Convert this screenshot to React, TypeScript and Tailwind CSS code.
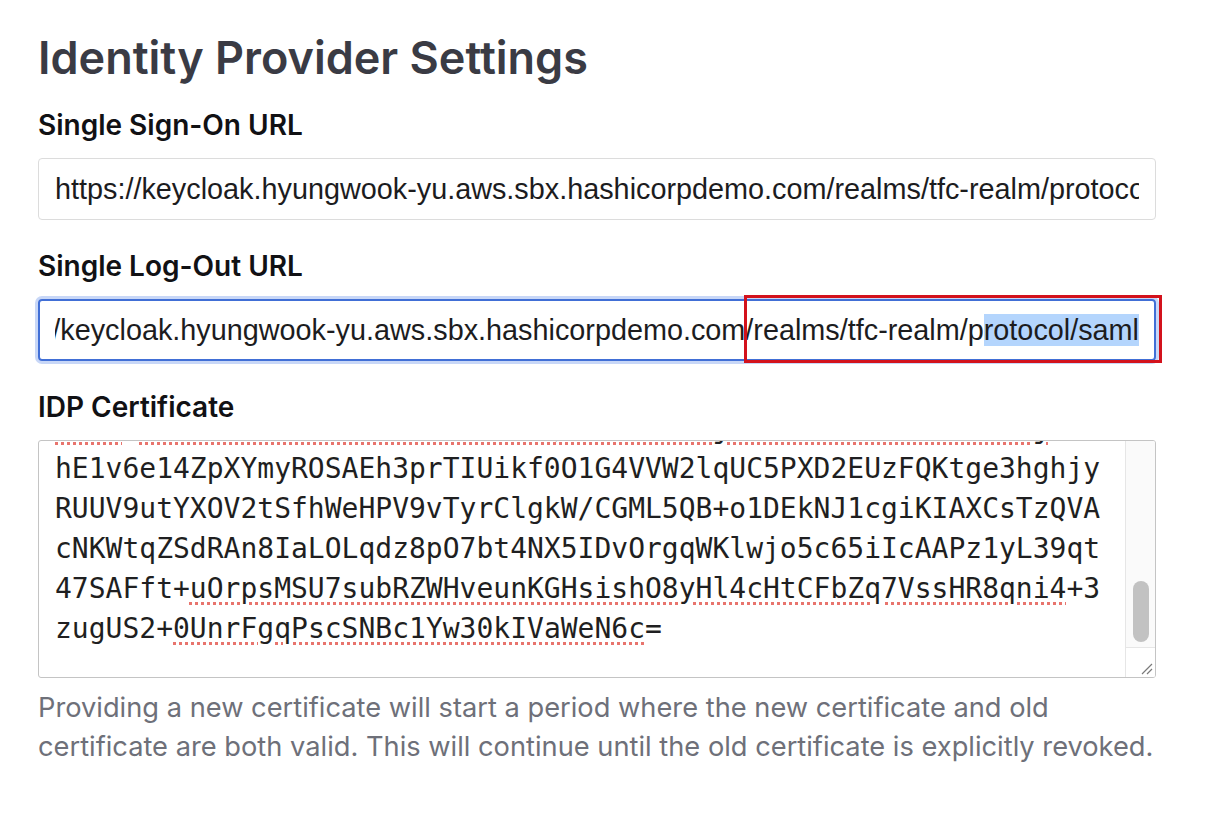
import React from 'react';

const SSO_URL =
  'https://keycloak.hyungwook-yu.aws.sbx.hashicorpdemo.com/realms/tfc-realm/protocol/saml';

function Label({ children, className = '' }: { children: React.ReactNode; className?: string }) {
  return (
    <label className={`block text-[28px] font-semibold leading-[32px] text-[#111114] ${className}`}>
      {children}
    </label>
  );
}

// spell-check style squiggle
function Sq({ children }: { children: React.ReactNode }) {
  return (
    <span className="underline decoration-dotted decoration-[#e8746d] decoration-3 underline-offset-[4px]">
      {children}
    </span>
  );
}

function CertText() {
  return (
    <div className="-mt-[32px] whitespace-pre font-['DejaVu_Sans_Mono','Liberation_Mono',monospace] text-[28px] leading-[40px] text-[#1f1f21]">
      <div>
        <Sq>Tm8u</Sq>+<Sq>XdRt3JzK0sVbW7nHs2LcYf9dQe4aUkM1iPj6oNx5wBxE3rLhZl8uDj</Sq>+Ck
      </div>
      <div>hE1v6e14ZpXYmyROSAEh3prTIUikf0O1G4VVW2lqUC5PXD2EUzFQKtge3hghjy</div>
      <div>RUUV9utYXOV2tSfhWeHPV9vTyrClgkW/CGML5QB+o1DEkNJ1cgiKIAXCsTzQVA</div>
      <div>cNKWtqZSdRAn8IaLOLqdz8pO7bt4NX5IDvOrgqWKlwjo5c65iIcAAPz1yL39qt</div>
      <div>
        47SAFft+<Sq>uOrpsMSU7subRZWHveunKGHsishO8yHl4cHtCFbZq7VssHR8qni4</Sq>+3
      </div>
      <div>
        zugUS2+<Sq>0UnrFgqPscSNBc1Yw30kIVaWeN6c</Sq>=
      </div>
    </div>
  );
}

export default function App() {
  return (
    <div className="min-h-screen w-full bg-white font-['Inter','Noto_Sans',sans-serif]">
      <div className="ml-[38px] flex w-[1118px] flex-col pt-[30px]">
        <h1 className="text-[45px] font-semibold leading-[56px] text-[#3a3b44]">
          Identity Provider Settings
        </h1>

        <Label className="mt-[23px]">Single Sign-On URL</Label>
        <div className="mt-[17px] flex h-[62px] items-center rounded-[4px] border border-[#dcdcdc] px-[16px]">
          <div className="min-w-0 flex-1 overflow-hidden whitespace-nowrap font-['Liberation_Sans',Arial,sans-serif] text-[28.8px] leading-[34px] text-[#1c1c1e]">
            {SSO_URL}
          </div>
        </div>

        <Label className="mt-[30px]">Single Log-Out URL</Label>
        <div className="relative mt-[17px]">
          <div className="flex h-[62px] items-center rounded-[4px] border-2 border-[#416fd6] px-[15px] ring-[3px] ring-[#c8d7f7]">
            <div className="flex min-w-0 flex-1 justify-end overflow-hidden whitespace-nowrap font-['Liberation_Sans',Arial,sans-serif] text-[28.8px] leading-[34px] text-[#1c1c1e]">
              <span className="shrink-0">
                https://keycloak.hyungwook-yu.aws.sbx.hashicorpdemo.com/realms/tfc-realm/p
                <span className="bg-[#b4d5fd]">rotocol/saml</span>
              </span>
            </div>
          </div>
          {/* annotation box */}
          <div className="pointer-events-none absolute left-[706px] top-[-4px] h-[68px] w-[418px] border-[3px] border-[#d3121c]" />
        </div>

        <Label className="mt-[30px]">IDP Certificate</Label>
        <div className="mt-[17px] flex h-[238px] overflow-hidden rounded-[3px] border border-[#c4c4c4]">
          <div className="min-w-0 flex-1 overflow-hidden pl-[16px]">
            <CertText />
          </div>
          <div className="flex w-[30px] flex-col border-l border-[#e6e6e6] bg-[#fafafa]">
            <div className="flex flex-1 flex-col items-center pt-[140px]">
              <div className="h-[61px] w-[16px] rounded-full bg-[#c2c2c2]" />
            </div>
            <div className="flex h-[30px] items-end justify-end border-t border-[#e6e6e6] bg-white p-[2px]">
              <svg width="14" height="14" viewBox="0 0 14 14" fill="none">
                <path d="M13 3L3 13M13 8L8 13" stroke="#7a7a7a" strokeWidth="1.2" />
              </svg>
            </div>
          </div>
        </div>

        <p className="mt-[10px] text-[27.25px] leading-[39px] text-[#6e7079]">
          Providing a new certificate will start a period where the new certificate and old
          certificate are both valid. This will continue until the old certificate is explicitly
          revoked.
        </p>
      </div>
    </div>
  );
}
